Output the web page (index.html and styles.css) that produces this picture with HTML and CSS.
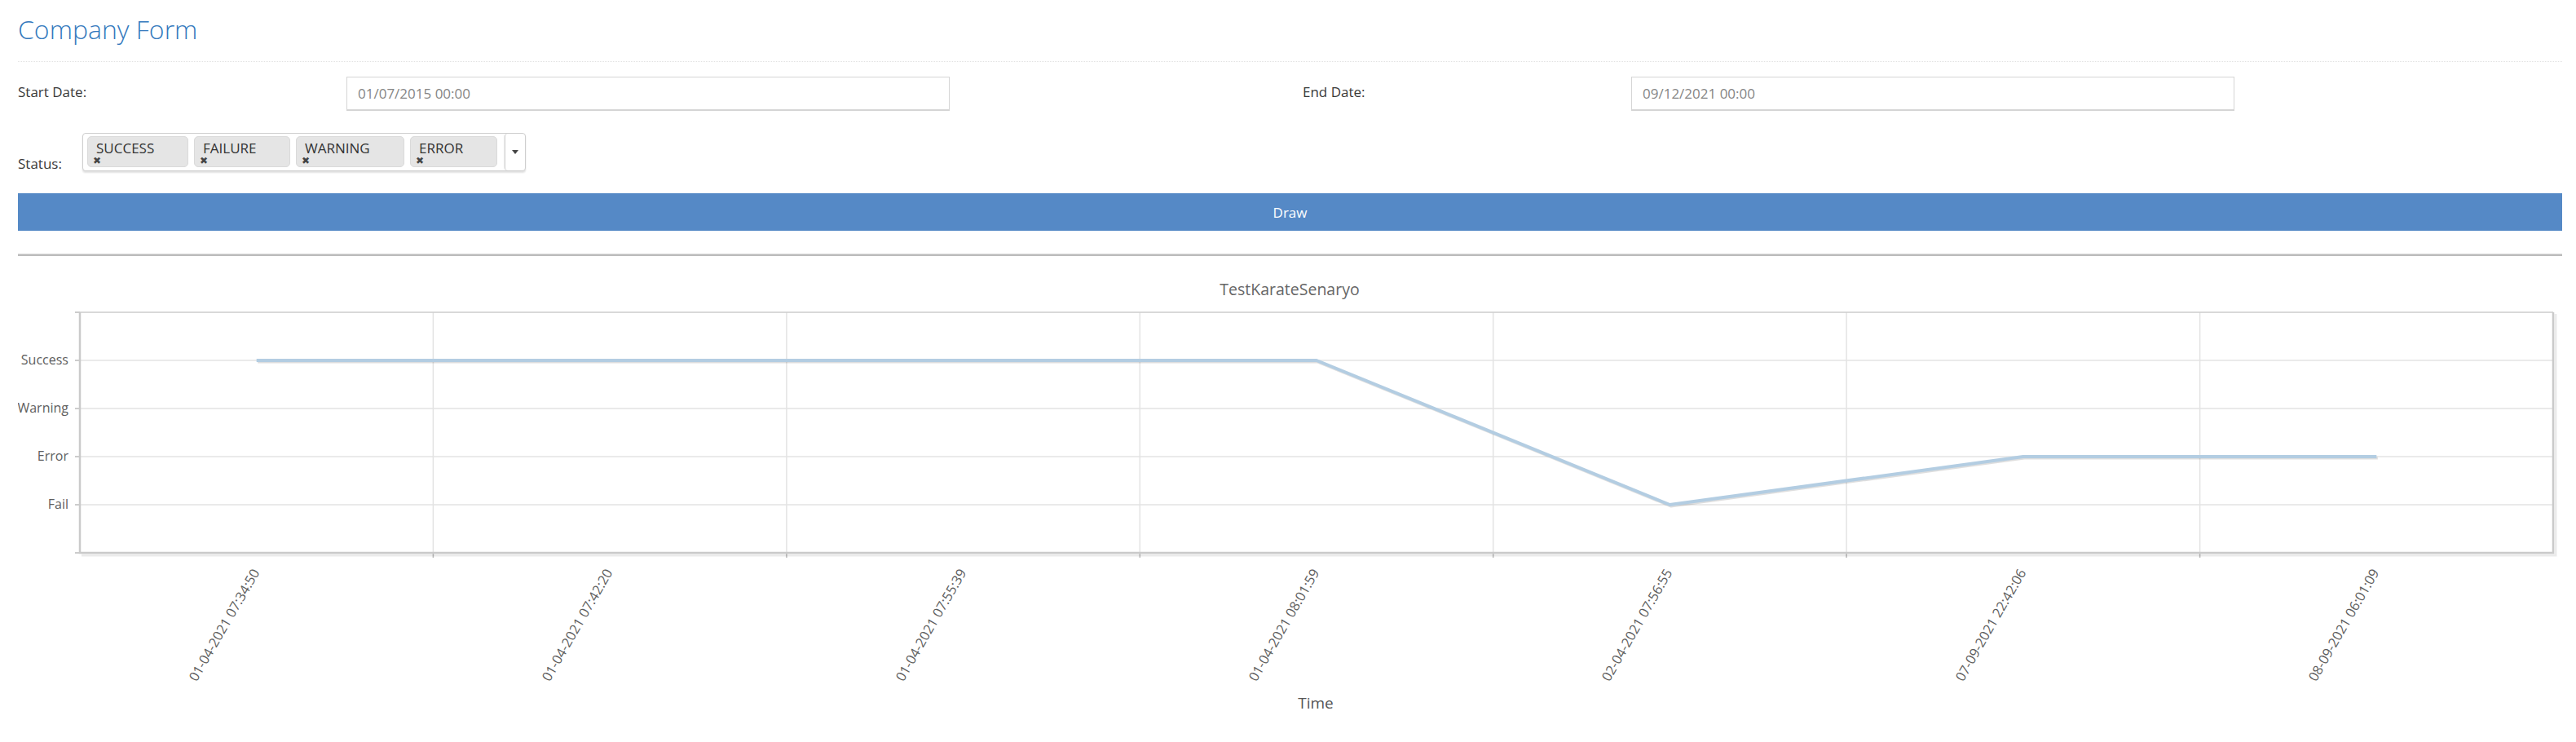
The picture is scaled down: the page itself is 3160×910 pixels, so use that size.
FILE: index.html
```html
<!DOCTYPE html>
<html>
<head>
<meta charset="utf-8">
<title>Company Form</title>
<link rel="stylesheet" href="styles.css">
</head>
<body>
<div class="page">
  <div class="page-header"><h1>Company Form</h1></div>
  <form class="form">
    <div class="dates">
      <div class="field"><label>Start Date:</label><input type="text" value="01/07/2015 00:00"></div>
      <div class="field"><label>End Date:</label><input type="text" value="09/12/2021 00:00"></div>
    </div>
    <div class="status-row">
      <label>Status:</label>
      <div class="chosen">
        <ul class="choices">
          <li class="choice"><span class="choice-text">SUCCESS</span><span class="choice-close">✖</span></li>
          <li class="choice"><span class="choice-text">FAILURE</span><span class="choice-close">✖</span></li>
          <li class="choice"><span class="choice-text">WARNING</span><span class="choice-close">✖</span></li>
          <li class="choice"><span class="choice-text">ERROR</span><span class="choice-close">✖</span></li>
        </ul>
        <div class="toggle"><span class="caret"></span></div>
      </div>
    </div>
    <button type="button" class="draw">Draw</button>
  </form>
  <hr class="sep">
  <div class="chart">
    <svg class="chart-svg" width="3121" height="580" viewBox="0 0 3121 580">
      <text class="chart-title" x="1560" y="48" text-anchor="middle">TestKarateSenaryo</text>
      <g class="grid">
        <line x1="76" y1="128" x2="3110" y2="128"/>
        <line x1="76" y1="187" x2="3110" y2="187"/>
        <line x1="76" y1="246" x2="3110" y2="246"/>
        <line x1="76" y1="305" x2="3110" y2="305"/>
        <line x1="509.4" y1="69" x2="509.4" y2="364"/>
        <line x1="942.9" y1="69" x2="942.9" y2="364"/>
        <line x1="1376.3" y1="69" x2="1376.3" y2="364"/>
        <line x1="1809.7" y1="69" x2="1809.7" y2="364"/>
        <line x1="2243.1" y1="69" x2="2243.1" y2="364"/>
        <line x1="2676.6" y1="69" x2="2676.6" y2="364"/>
      </g>
      <g class="ticks">
        <line x1="70" y1="69" x2="76" y2="69"/>
        <line x1="70" y1="128" x2="76" y2="128"/>
        <line x1="70" y1="187" x2="76" y2="187"/>
        <line x1="70" y1="246" x2="76" y2="246"/>
        <line x1="70" y1="305" x2="76" y2="305"/>
        <line x1="70" y1="364" x2="76" y2="364"/>
        <line x1="509.4" y1="364" x2="509.4" y2="370"/>
        <line x1="942.9" y1="364" x2="942.9" y2="370"/>
        <line x1="1376.3" y1="364" x2="1376.3" y2="370"/>
        <line x1="1809.7" y1="364" x2="1809.7" y2="370"/>
        <line x1="2243.1" y1="364" x2="2243.1" y2="370"/>
        <line x1="2676.6" y1="364" x2="2676.6" y2="370"/>
      </g>
      <g class="border-shadow">
        <polyline points="78,367 3113,367 3113,71"/>
      </g>
      <line class="border-top" x1="76" y1="69" x2="3110" y2="69"/>
      <polyline class="border" points="76,69 76,364 3110,364 3110,69"/>
      <g class="ylabels">
        <text x="62" y="133">Success</text>
        <text x="62" y="192">Warning</text>
        <text x="62" y="251">Error</text>
        <text x="62" y="310">Fail</text>
      </g>
      <polyline class="series-shadow" points="292.7,128 726.2,128 1159.6,128 1593,128 2026.4,305 2459.9,246 2893.3,246" transform="translate(1.5,2)"/>
      <polyline class="series" points="292.7,128 726.2,128 1159.6,128 1593,128 2026.4,305 2459.9,246 2893.3,246"/>
      <g class="xlabels">
        <text x="297" y="388" transform="rotate(-60 297 388)">01-04-2021 07:34:50</text>
        <text x="730" y="388" transform="rotate(-60 730 388)">01-04-2021 07:42:20</text>
        <text x="1164" y="388" transform="rotate(-60 1164 388)">01-04-2021 07:55:39</text>
        <text x="1597" y="388" transform="rotate(-60 1597 388)">01-04-2021 08:01:59</text>
        <text x="2030" y="388" transform="rotate(-60 2030 388)">02-04-2021 07:56:55</text>
        <text x="2464" y="388" transform="rotate(-60 2464 388)">07-09-2021 22:42:06</text>
        <text x="2897" y="388" transform="rotate(-60 2897 388)">08-09-2021 06:01:09</text>
      </g>
      <text class="axis-title" x="1592" y="555" text-anchor="middle">Time</text>
    </svg>
  </div>
</div>
</body>
</html>
```
FILE: styles.css
```css
* { box-sizing: border-box; }

body {
  margin: 0;
  background: #fff;
  font-family: "Open Sans", "Liberation Sans", sans-serif;
  font-size: 17px;
  color: #393939;
}

.page {
  padding: 0 17px 0 22px;
}

.page-header {
  padding: 19px 0 22px;
  border-bottom: 1px dotted #e2e2e2;
}

.page-header h1 {
  margin: 0;
  font-size: 32px;
  font-weight: 300;
  line-height: 34px;
  color: #3479bd;
}

.form {
  margin: 0;
}

.dates {
  display: grid;
  grid-template-columns: 1576px 1fr;
  margin-top: 18px;
}

.field {
  display: grid;
  grid-template-columns: 403px 740px;
  align-items: center;
}

.field label {
  line-height: 24px;
  margin-top: -4px;
}

.field input {
  height: 42px;
  border: 1px solid #d5d5d5;
  border-bottom-width: 2px;
  padding: 0 13px;
  font-family: inherit;
  font-size: 17px;
  color: #858585;
  background: #fff;
  outline: none;
}

.status-row {
  display: flex;
  align-items: flex-end;
  margin-top: 27px;
}

.status-row label {
  width: 79px;
  line-height: 24px;
  margin-bottom: -3px;
}

.chosen {
  display: flex;
  width: 544px;
  height: 47px;
  border: 1px solid #cfcfcf;
  border-radius: 4px;
  box-shadow: 0 2px 2px rgba(0, 0, 0, 0.12);
  background: #fff;
}

.choices {
  display: flex;
  gap: 7px;
  margin: 0;
  padding: 3px 0 0 5px;
  list-style: none;
  flex: 1;
}

.choice {
  display: flex;
  flex-direction: column;
  height: 38px;
  padding: 3px 0 0 0;
  background: #e5e5e5;
  border: 1px solid #dadada;
  border-radius: 5px;
  color: #333;
}

.choice:nth-child(1) { width: 124px; }
.choice:nth-child(2) { width: 118px; }
.choice:nth-child(3) { width: 133px; }
.choice:nth-child(4) { width: 107px; }

.choice-text {
  font-size: 17px;
  line-height: 21px;
  padding-left: 10px;
}

.choice-close {
  font-family: "DejaVu Sans", sans-serif;
  font-size: 12px;
  line-height: 10px;
  padding-left: 6px;
  color: #444;
}

.toggle {
  width: 25px;
  height: 45px;
  border-left: 1px solid #d0d0d0;
  border-radius: 4px;
  display: flex;
  align-items: center;
  justify-content: center;
  box-shadow: -1px 0 1px rgba(0, 0, 0, 0.08);
}

.caret {
  width: 0;
  height: 0;
  border-left: 4px solid transparent;
  border-right: 4px solid transparent;
  border-top: 5px solid #444;
}

.draw {
  display: block;
  width: 100%;
  height: 46px;
  margin-top: 27px;
  border: none;
  background: #5589c6;
  color: #fff;
  font-family: inherit;
  font-size: 17px;
}

.sep {
  margin: 28px 0 0;
  border: 0;
  height: 3px;
  background: linear-gradient(#d8d8d8 0 1px, #bcbcbc 1px);
}

.chart-svg {
  display: block;
  font-family: "Open Sans", "Liberation Sans", sans-serif;
}

.chart-title {
  font-size: 19.5px;
  fill: #666;
}

.grid line {
  stroke: #e3e3e3;
  stroke-width: 1.5;
}

.ticks line {
  stroke: #bbb;
  stroke-width: 1.5;
}

.border-top {
  stroke: #cdcdcd;
  stroke-width: 1.5;
}

.border {
  fill: none;
  stroke: #cacaca;
  stroke-width: 2.5;
}

.border-shadow polyline {
  fill: none;
  stroke: rgba(0, 0, 0, 0.08);
  stroke-width: 3;
}

.ylabels text {
  font-size: 16px;
  fill: #5e5e5e;
  text-anchor: end;
}

.series {
  fill: none;
  stroke: #b3cde2;
  stroke-width: 4;
  stroke-linejoin: round;
}

.series-shadow {
  fill: none;
  stroke: rgba(0, 0, 0, 0.13);
  stroke-width: 3;
  stroke-linejoin: round;
}

.xlabels text {
  font-size: 16.5px;
  fill: #5e5e5e;
  text-anchor: end;
}

.axis-title {
  font-size: 19px;
  fill: #555;
}
```
